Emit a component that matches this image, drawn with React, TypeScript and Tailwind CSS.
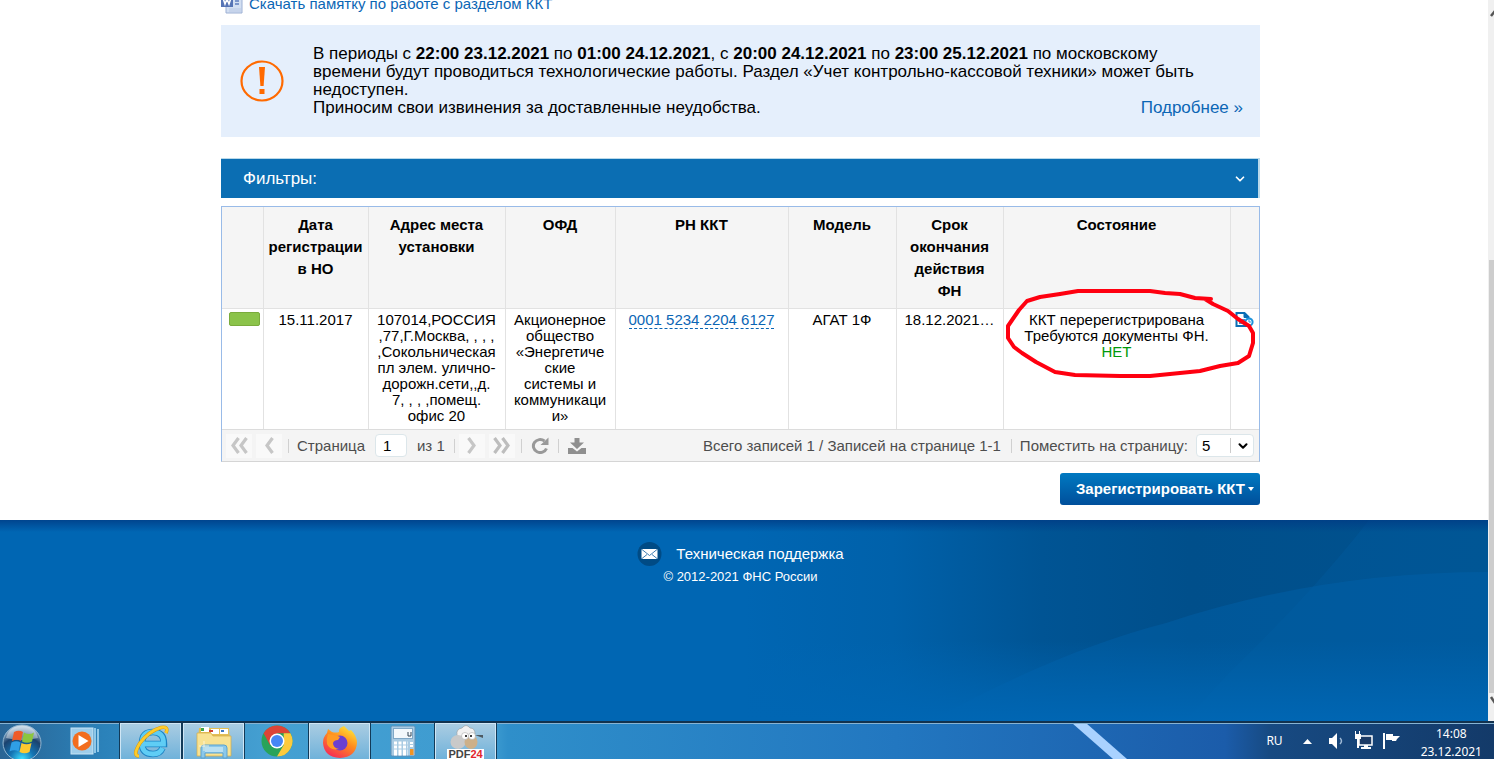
import { useState } from 'react';
import type { ReactNode } from 'react';
import { ChevronDown } from 'lucide-react';

interface Column {
  title: string[];
  width: string;
}

const COLUMNS: Column[] = [
  { title: [], width: 'w-[41px]' },
  { title: ['Дата', 'регистрации', 'в НО'], width: 'w-[105px]' },
  { title: ['Адрес места', 'установки'], width: 'w-[137px]' },
  { title: ['ОФД'], width: 'w-[110px]' },
  { title: ['РН ККТ'], width: 'w-[173px]' },
  { title: ['Модель'], width: 'w-[108px]' },
  { title: ['Срок', 'окончания', 'действия', 'ФН'], width: 'w-[107px]' },
  { title: ['Состояние'], width: 'w-auto' },
  { title: [], width: 'w-[29px]' },
];

const ADDRESS = [
  '107014,РОССИЯ',
  ',77,Г.Москва, , , ,',
  ',Сокольническая',
  'пл элем. улично-',
  'дорожн.сети,,д.',
  '7, , , ,помещ.',
  'офис 20',
];

const OFD = ['Акционерное', 'общество', '«Энергетиче', 'ские', 'системы и', 'коммуникаци', 'и»'];

function Lines({ items }: { items: string[] }) {
  return (
    <>
      {items.map((line) => (
        <span key={line} className="block whitespace-nowrap">{line}</span>
      ))}
    </>
  );
}

function WordIcon() {
  return (
    <svg width="22" height="22" viewBox="0 0 22 22" aria-hidden="true">
      <path d="M5 1h12l4 4v16H5z" fill="#d3dff2" stroke="#9db0d4" />
      <path d="M8 17h12M8 19h12" stroke="#b9c8e4" />
      <rect x="0" y="3" width="12" height="12" fill="#5674b5" />
      <path d="M2 6l2 6 2-5 2 5 2-6" fill="none" stroke="#fff" strokeWidth="1.5" />
      <path d="M14 9h4M14 12h4" stroke="#5f7fbe" strokeWidth="1.5" />
    </svg>
  );
}

function WarningIcon() {
  return (
    <svg width="44" height="42" viewBox="0 0 44 42" className="shrink-0" aria-hidden="true">
      <ellipse cx="22" cy="21" rx="20.5" ry="19.5" fill="none" stroke="#ff6a00" strokeWidth="2.2" />
      <path d="M19 7h6l-1.4 19h-3.2z" fill="#ff6a00" />
      <rect x="19.5" y="29" width="5" height="5" fill="#ff6a00" />
    </svg>
  );
}

function DocumentIcon() {
  return (
    <svg width="19" height="16" viewBox="0 0 19 16" aria-hidden="true">
      <path d="M1.5 1h8l4 4v9h-12z" fill="#fff" stroke="#0b6fb5" strokeWidth="2" />
      <path d="M9 1v4.5h5" fill="#0b6fb5" stroke="#0b6fb5" />
      <path d="M4 8h6M4 11h5" stroke="#0b6fb5" strokeWidth="1.6" />
      <circle cx="14" cy="10" r="3.6" fill="#fff" stroke="#1c93dc" strokeWidth="2" />
      <path d="M14 7.5V10h2" fill="none" stroke="#1c93dc" />
    </svg>
  );
}

function PagerButton({ label, children }: { label: string; children: ReactNode }) {
  return (
    <button type="button" aria-label={label} className="flex h-6 w-[26px] items-center justify-center bg-[#f9f9f9]">
      {children}
    </button>
  );
}

function Separator() {
  return <span className="h-[14px] w-px bg-[#d0d0d0]" />;
}

function Pager() {
  const [page, setPage] = useState('1');

  return (
    <div className="flex h-8 items-center justify-between border-t border-[#dcdcdc] bg-[#f4f4f4] pl-1 pr-[5px] text-[15px] leading-4 text-[#4d4d4d]">
      <div className="flex items-center">
        <PagerButton label="Первая страница">
          <svg width="18" height="17" viewBox="0 0 18 17" fill="none" stroke="#c6c6c6" strokeWidth="3.2">
            <path d="M8.5 1L3 8.5L8.5 16M16.5 1L11 8.5L16.5 16" />
          </svg>
        </PagerButton>
        <span className="w-1" />
        <PagerButton label="Предыдущая страница">
          <svg width="10" height="17" viewBox="0 0 10 17" fill="none" stroke="#c6c6c6" strokeWidth="3.2">
            <path d="M8.5 1L3 8.5L8.5 16" />
          </svg>
        </PagerButton>
        <span className="w-[6px]" />
        <Separator />
        <label htmlFor="page" className="pl-2">Страница</label>
        <input
          id="page"
          value={page}
          onChange={(e) => setPage(e.target.value)}
          className="ml-[10px] h-[23px] w-8 rounded border border-[#dce6ea] bg-white px-[7px] text-[15px] text-black"
        />
        <span className="w-[47px] pl-[10px] whitespace-nowrap">из 1</span>
        <Separator />
        <span className="w-1" />
        <PagerButton label="Следующая страница">
          <svg width="10" height="17" viewBox="0 0 10 17" fill="none" stroke="#c6c6c6" strokeWidth="3.2">
            <path d="M1.5 1L7 8.5L1.5 16" />
          </svg>
        </PagerButton>
        <span className="w-1" />
        <PagerButton label="Последняя страница">
          <svg width="18" height="17" viewBox="0 0 18 17" fill="none" stroke="#bdbdbd" strokeWidth="3.2">
            <path d="M1.5 1L7 8.5L1.5 16M9.5 1L15 8.5L9.5 16" />
          </svg>
        </PagerButton>
        <span className="w-[6px]" />
        <Separator />
        <button type="button" aria-label="Обновить" className="flex w-9 justify-center">
          <svg width="18" height="17" viewBox="0 0 18 17" aria-hidden="true">
            <path d="M15.5 11.5A6.8 6.5 0 1 1 13.5 4" fill="none" stroke="#999" strokeWidth="3" />
            <path d="M17.5 .5v7.500h-8z" fill="#999" />
          </svg>
        </button>
        <Separator />
        <button type="button" aria-label="Скачать" className="flex w-9 justify-center">
          <svg width="18" height="16" viewBox="0 0 18 16" fill="#8f8f8f" aria-hidden="true">
            <path d="M6.500 0h5v4.500h4.500L9 11 2 4.500h4.500z" />
            <path d="M0 10h4.500L9 13.500 13.500 10H18v6H0z" />
          </svg>
        </button>
      </div>
      <div className="flex items-center whitespace-nowrap">
        <span className="pr-[10px]">Всего записей 1 / Записей на странице 1-1</span>
        <Separator />
        <label htmlFor="size" className="pl-2">Поместить на страницу:</label>
        <span className="relative ml-2 flex">
          <select
            id="size"
            defaultValue="5"
            className="h-[23px] w-[58px] appearance-none rounded border border-[#dce6ea] bg-white px-[5px] text-[15px] text-black"
          >
            <option>5</option>
            <option>10</option>
            <option>20</option>
          </select>
          <span className="pointer-events-none absolute inset-y-1 right-0 flex w-6 items-center justify-center border-l border-[#ccc] text-black">
            <ChevronDown size={14} strokeWidth={3.5} />
          </span>
        </span>
      </div>
    </div>
  );
}

function CashRegisterTable() {
  return (
    <div className="relative border border-[#99bbe8] border-b-[#d5d5d5]">
      <table className="w-full table-fixed border-collapse text-center text-[15px]">
        <thead className="bg-[#f5f5f5] leading-[22px]">
          <tr className="h-[101px] align-top">
            {COLUMNS.map((col, i) => (
              <th key={i} className={`${col.width} border-b border-r border-[#e2e2e2] pt-[7px] font-bold last:border-r-0`}>
                <Lines items={col.title} />
              </th>
            ))}
          </tr>
        </thead>
        <tbody className="leading-4">
          <tr className="h-[121px] align-top *:border-r *:border-[#e2e2e2] *:pt-[3px] *:last:border-r-0">
            <td>
              <span className="ml-[7px] block h-[14px] w-[31px] rounded-[2px] border border-[#7aab3c] bg-[#8bc34a]" />
            </td>
            <td>15.11.2017</td>
            <td><Lines items={ADDRESS} /></td>
            <td><Lines items={OFD} /></td>
            <td>
              <a href="#kkt" className="inline-block border-b border-dashed border-[#0b66b5] text-[#0b66b5]">0001 5234 2204 6127</a>
            </td>
            <td>АГАТ 1Ф</td>
            <td>18.12.2021…</td>
            <td>
              <Lines items={['ККТ перерегистрирована', 'Требуются документы ФН.']} />
              <span className="text-[#00990a]">НЕТ</span>
            </td>
            <td>
              <a href="#docs" aria-label="Документы" className="flex justify-center"><DocumentIcon /></a>
            </td>
          </tr>
        </tbody>
      </table>
      <Pager />
      {/* red marker around the status cell */}
      <svg width="252" height="94" viewBox="1004 287 252 94" className="pointer-events-none absolute right-[3px] top-20" aria-hidden="true">
        <path
          d="M1211 299L1195 298L1180 294L1165 293L1150 291H1078L1060 294L1040 297L1027 301L1019 310L1008 326V338L1014 347L1022 353L1036 362L1055 372L1075 375L1120 376L1150 376L1180 373L1200 371L1220 366L1238 363L1249 356L1253 343V333L1249 326L1238 319L1228 311L1213 304L1205 299"
          fill="none"
          stroke="#ff0010"
          strokeWidth="4"
          strokeLinejoin="round"
          strokeLinecap="round"
        />
      </svg>
    </div>
  );
}

function Footer() {
  return (
    <footer className="relative grow bg-[#0066b3] pt-[22px] text-white">
      <svg viewBox="0 0 1488 201" preserveAspectRatio="none" className="absolute inset-0 h-full w-full" aria-hidden="true">
        <defs>
          <linearGradient id="deep" x1="0" x2="1">
            <stop offset="0.5" stopColor="#0066b3" />
            <stop offset="0.6" stopColor="#0061aa" />
            <stop offset="0.7" stopColor="#005494" />
            <stop offset="0.8" stopColor="#004f8b" />
            <stop offset="1" stopColor="#00528f" />
          </linearGradient>
          <linearGradient id="rise" x1="0" y1="0" x2="0" y2="1">
            <stop offset="0.6" stopColor="#0066b3" stopOpacity="0" />
            <stop offset="1" stopColor="#0066b3" />
          </linearGradient>
          <linearGradient id="edge" x1="0" y1="0" x2="0" y2="1">
            <stop offset="0" stopColor="#003c85" stopOpacity="0.8" />
            <stop offset="1" stopColor="#003c85" stopOpacity="0" />
          </linearGradient>
        </defs>
        <rect width="1488" height="201" fill="url(#deep)" />
        <path d="M1369 0Q1315 70 1229 153L1185 201H1488V0z" fill="#0060a5" opacity="0.3" />
        <path d="M976 177Q1080 125 1166 103Q1320 52 1488 52V201H930z" fill="#0062aa" opacity="0.45" />
        <rect width="1488" height="201" fill="url(#rise)" />
        <rect width="1488" height="12" fill="url(#edge)" />
      </svg>
      <div className="relative flex flex-col items-center pr-[7px]">
        <a href="#support" className="flex items-center gap-[14px] text-[15px] leading-6">
          <svg width="25" height="24" viewBox="0 0 25 24" aria-hidden="true">
            <circle cx="12.5" cy="12" r="12" fill="#004b85" />
            <rect x="4.5" y="7" width="16" height="10" rx="1" fill="#fff" />
            <path d="M5 7.5l7.5 6 7.5-6M5 16.5l5-4M20 16.5l-5-4" fill="none" stroke="#3f7fb5" />
          </svg>
          Техническая поддержка
        </a>
        <p className="pt-[3px] text-[13px] leading-4">© 2012-2021 ФНС России</p>
      </div>
    </footer>
  );
}

function Scrollbar() {
  return (
    <div className="flex w-[6px] shrink-0 flex-col overflow-hidden bg-[#f0f0f0]" aria-hidden="true">
      <svg width="6" height="260" viewBox="0 0 6 260"><path d="M3 16l4-5" stroke="#555" strokeWidth="2.5" /></svg>
      <span className="ml-px grow bg-[#cdcdcd]" />
      <svg width="6" height="28" viewBox="0 0 6 28"><path d="M3 4l4 6" stroke="#555" strokeWidth="2.5" /></svg>
    </div>
  );
}

function StartIcon() {
  return (
    <svg width="42" height="36" viewBox="0 0 42 36" aria-hidden="true">
      <defs>
        <radialGradient id="orb" cx="0.5" cy="0.95" r="0.9">
          <stop offset="0" stopColor="#3ee0ff" />
          <stop offset="0.35" stopColor="#1475b5" />
          <stop offset="0.7" stopColor="#1b426e" />
          <stop offset="1" stopColor="#a9c3d8" />
        </radialGradient>
      </defs>
      <ellipse cx="21" cy="20" rx="19" ry="18" fill="url(#orb)" stroke="#8fb4d0" />
      <path d="M5 15Q8 3 21 2.500Q34 3 37 15Q21 19 5 15z" fill="#fff" opacity="0.4" />
      <path d="M13 9q5-2.500 9 0l-2 9q-4-2.500-9 0z" fill="#ef5a28" />
      <path d="M23 9.500q5 3 10 0l-2 9q-5 2.500-10 0z" fill="#8cc63e" />
      <path d="M10.500 19.500q5-2.500 9 0l-2 9q-4-2.500-9 0z" fill="#2f9fe6" />
      <path d="M20.500 20q5 2.500 10 0l-2 9q-5 2.500-10 0z" fill="#fdc92f" />
    </svg>
  );
}

function PlayerIcon() {
  return (
    <svg width="30" height="28" viewBox="0 0 30 28" aria-hidden="true">
      <path d="M24 1h2v25h-2zM27 2h2v23h-2z" fill="#8ec7e8" />
      <rect x="1" y="1" width="22" height="26" fill="#9ecdea" stroke="#c7e4f5" />
      <circle cx="12" cy="14" r="9.5" fill="#f26d1e" />
      <path d="M8.500 8l10 6-10 6z" fill="#fff" />
    </svg>
  );
}

function ExplorerEIcon() {
  return (
    <svg width="36" height="34" viewBox="0 0 36 34" fill="none" aria-hidden="true">
      <path d="M11 19H31Q31 7 20 7 9 7 9 18.500 9 29 20 29 27 29 29.500 23" stroke="#1c83c4" strokeWidth="6.500" />
      <path d="M11 19H30.500Q31 7 20 7 9 7 9 18.500 9 29 20 29 27 29 29.500 23" stroke="#5fcdf5" strokeWidth="4.800" />
      <path d="M6 31Q-1 31 7 18 16 6 28 2.500 36 1 33 8" stroke="#d99a10" strokeWidth="3.600" />
      <path d="M6 31Q-1 31 7 18 16 6 28 2.500 36 1 33 8" stroke="#fdcb2b" strokeWidth="2.600" />
    </svg>
  );
}

function FolderIcon() {
  return (
    <svg width="38" height="34" viewBox="0 0 38 34" aria-hidden="true">
      <path d="M4 3h30l2 26H2z" fill="#e3bf55" />
      <path d="M6 2h8v5H6zM16 4h8v5h-8zM25 4h8v5h-8z" fill="#fff" />
      <path d="M6 3h3v3H6z" fill="#3fa64b" />
      <path d="M14 5h4v2h-4z" fill="#d2432e" />
      <path d="M26 5h3v2h-3z" fill="#3e78c4" />
      <path d="M2 8h14l2 3h18v20H2z" fill="#f8e292" stroke="#d5ae45" strokeWidth=".7" />
      <path d="M6 33V23q0-3 3-3h20q3 0 3 3v10h-4v-5H10v5z" fill="#8bc8ea" stroke="#5ba2cf" />
      <path d="M10 22h18v5H10z" fill="#b9e0f3" />
      <path d="M9 16v10M4 21h10" stroke="#fffbe2" strokeWidth=".8" />
    </svg>
  );
}

function ChromeIcon() {
  return (
    <svg width="34" height="32" viewBox="0 0 34 32" aria-hidden="true">
      <circle cx="17" cy="16" r="15.5" fill="#28a35a" />
      <path d="M3.600 8.200A15.500 15.500 0 0 1 30.400 8.200H17L10 20z" fill="#db4437" />
      <path d="M30.400 8.200A15.500 15.500 0 0 1 17 31.500L23.700 20V8.200z" fill="#fdca3d" />
      <circle cx="17" cy="16" r="7.5" fill="#fff" />
      <circle cx="17" cy="16" r="6" fill="#4687f4" />
    </svg>
  );
}

function FirefoxIcon() {
  return (
    <svg width="36" height="34" viewBox="0 0 36 34" aria-hidden="true">
      <defs>
        <linearGradient id="fox" x1="0.8" y1="0" x2="0.2" y2="1">
          <stop offset="0" stopColor="#ffe93a" />
          <stop offset="0.45" stopColor="#ff8a1e" />
          <stop offset="1" stopColor="#f5235b" />
        </linearGradient>
      </defs>
      <path d="M22 1q3 3 5 5l2-1q6 6 6 13-1 14-17 15Q2 32 1 18q0-6 4-10l1-4 4 3q4 1 7 0-1-4 5-6z" fill="url(#fox)" />
      <circle cx="18" cy="18" r="7.5" fill="#6b3fd1" />
      <path d="M6 9q8 1 12 3l-2 3q-4 0-5 3 0 5 6 6-9 2-12-5-1-5 1-10z" fill="#ff9a24" />
    </svg>
  );
}

function CalculatorIcon() {
  return (
    <svg width="26" height="32" viewBox="0 0 26 32" aria-hidden="true">
      <rect x="1" y="1" width="24" height="30" rx="1.5" fill="#a9cbe3" stroke="#5f90b8" />
      <rect x="3.5" y="3.5" width="19" height="10" fill="#f3f8fc" stroke="#7fa7c6" />
      <path d="M18 7v4h3V7" fill="none" stroke="#345" strokeWidth="1" />
      <path d="M4 18h14M4 22h14M4 26h14M4 29h14" stroke="#fff" strokeWidth="2.8" strokeDasharray="3 1.5" />
      <path d="M20 18h3M20 21h3" stroke="#fff" strokeWidth="2" />
      <rect x="20" y="24" width="3.5" height="6" fill="#f29422" />
    </svg>
  );
}

function SheepIcon() {
  return (
    <span className="flex flex-col items-center">
      <svg width="34" height="24" viewBox="0 0 34 24" aria-hidden="true">
        <path d="M8 10q-1-6 5-7 4-5 8 0 5 0 5 6l-2 3H10z" fill="#f1f1f1" stroke="#999" strokeWidth=".6" />
        <ellipse cx="9" cy="17" rx="7.500" ry="7" fill="#c9c9c9" />
        <ellipse cx="22" cy="17" rx="6.500" ry="7" fill="#cdb089" />
        <circle cx="16" cy="11" r="3.5" fill="#fff" stroke="#aaa" strokeWidth=".6" />
        <circle cx="23" cy="11" r="3.5" fill="#fff" stroke="#aaa" strokeWidth=".6" />
        <circle cx="17" cy="11" r="1" />
        <circle cx="22" cy="11" r="1" />
        <path d="M26 10h8v3z" fill="#4e5a62" />
      </svg>
      <span className="bg-white px-px text-[11px] font-bold leading-[10px] text-[#444]">
        PDF<span className="text-[#e2262c]">24</span>
      </span>
    </span>
  );
}

function TaskButton({ label, active, children }: { label: string; active?: boolean; children: ReactNode }) {
  return (
    <button
      type="button"
      aria-label={label}
      className={
        'flex h-full w-[61px] items-center justify-center overflow-hidden ' +
        (active ? 'border-x border-t border-[#cfe6f5] bg-linear-to-b from-[#a9cce2] to-[#6fb2da] outline outline-[#123a58]' : '')
      }
    >
      {children}
    </button>
  );
}

function Taskbar() {
  return (
    <div className="relative flex h-[38px] shrink-0 items-center justify-between overflow-hidden border-t-2 border-[#12324e] bg-[#2480c2] text-white">
      <svg viewBox="0 0 1494 36" preserveAspectRatio="none" className="absolute inset-0 h-full w-full" aria-hidden="true">
        <defs>
          <linearGradient id="aero" x1="0" x2="1">
            <stop offset="0" stopColor="#2a6595" />
            <stop offset="0.07" stopColor="#2b82ba" />
            <stop offset="0.18" stopColor="#45a0d2" />
            <stop offset="0.33" stopColor="#3d9bd0" />
            <stop offset="0.34" stopColor="#2f8fca" />
            <stop offset="0.6" stopColor="#2277c0" />
            <stop offset="0.82" stopColor="#1b5caa" />
            <stop offset="0.85" stopColor="#174a82" />
            <stop offset="1" stopColor="#133a69" />
          </linearGradient>
        </defs>
        <rect width="1494" height="36" fill="url(#aero)" />
        <path d="M1072 0h14l41 36h-14z" fill="#a9d2ff" />
        <path d="M0 .5h1494" stroke="#86b4d4" />
      </svg>
      <div className="relative flex h-full items-center gap-[2px]">
        <button type="button" aria-label="Пуск" className="flex w-[52px] pl-px"><StartIcon /></button>
        <TaskButton label="Проигрыватель"><PlayerIcon /></TaskButton>
        <span className="w-px" />
        <TaskButton label="Internet Explorer" active><ExplorerEIcon /></TaskButton>
        <TaskButton label="Проводник" active><FolderIcon /></TaskButton>
        <TaskButton label="Chrome"><ChromeIcon /></TaskButton>
        <TaskButton label="Firefox" active><FirefoxIcon /></TaskButton>
        <TaskButton label="Калькулятор"><CalculatorIcon /></TaskButton>
        <TaskButton label="PDF24" active><SheepIcon /></TaskButton>
      </div>
      <div className="relative flex items-center pr-[12px] font-['Noto_Sans',sans-serif] text-[12px] leading-[18px]">
        <span className="pr-5">RU</span>
        <svg width="9" height="5" viewBox="0 0 9 5" aria-hidden="true"><path d="M0 5L4.500 0 9 5z" fill="#fff" /></svg>
        <svg width="92" height="20" viewBox="0 0 92 20" fill="#fff" aria-hidden="true">
          <path d="M17 7h3l5-5v16l-5-5h-3z" />
          <path d="M28 7q3 3 0 6" fill="none" stroke="#9db8d4" strokeWidth="1.500" />
          <path d="M47 5h13v9H47z" fill="#1d3c66" stroke="#fff" strokeWidth="1.500" />
          <path d="M52 14h4v2h3v2h-10v-2h3zM43 3h6v5h-6zM45 8h2v9h-2zM43 0h1v3h-1zM47 0h1v3h-1z" />
          <path d="M71 2h2v16h-2zM74 3h7v2h7l-3 3-1 2h-4V9h-6z" />
        </svg>
        <div className="pl-[17px] pt-1 text-center">
          <p>14:08</p>
          <p>23.12.2021</p>
        </div>
      </div>
    </div>
  );
}

export default function App() {
  return (
    <div className="flex h-screen flex-col overflow-hidden bg-white font-['Liberation_Sans',Arial,sans-serif] text-black">
      <div className="flex min-h-0 grow">
        <div className="flex min-w-0 grow flex-col overflow-hidden">
          <main className="mx-auto w-full max-w-[1046px] shrink-0 pr-[7px]">
            <a href="#memo" className="flex h-[25px] items-start gap-[6px] text-[15px] leading-[7px] text-[#0b66b5]">
              <span className="-mt-2"><WordIcon /></span>
              Скачать памятку по работе с разделом ККТ
            </a>

            <section className="flex items-center bg-[#e5effc] py-5 pl-[19px] pr-[17px] text-[17px] leading-[18px]">
              <WarningIcon />
              <div className="grow pl-[29px]">
                <p>
                  В периоды с <b>22:00 23.12.2021</b> по <b>01:00 24.12.2021</b>, с <b>20:00 24.12.2021</b> по{' '}
                  <b>23:00 25.12.2021</b> по московскому
                  <br />
                  времени будут проводиться технологические работы. Раздел «Учет контрольно-кассовой техники» может быть
                  <br />
                  недоступен.
                </p>
                <div className="flex justify-between">
                  <p>Приносим свои извинения за доставленные неудобства.</p>
                  <a href="#more" className="text-[#0b66b5]">Подробнее »</a>
                </div>
              </div>
            </section>

            <button
              type="button"
              className="mt-[21px] flex h-10 w-full items-center justify-between border-t border-r-2 border-[#b9d9ea] bg-[#0b6eb3] pl-[22px] pr-[11px] text-[17px] text-white"
            >
              Фильтры:
              <ChevronDown size={14} strokeWidth={3} />
            </button>

            <div className="pt-2">
              <CashRegisterTable />
            </div>

            <div className="flex justify-end pb-[15px] pt-[11px]">
              <button
                type="button"
                className="flex h-8 items-center gap-[3px] rounded-[3px] bg-linear-to-b from-[#0079c1] to-[#004f9b] pl-4 pr-[6px] text-[15px] font-bold text-white"
              >
                Зарегистрировать ККТ
                <svg width="6" height="4" viewBox="0 0 6 4" aria-hidden="true"><path d="M0 0h6L3 4z" fill="#fff" /></svg>
              </button>
            </div>
          </main>
          <Footer />
        </div>
        <Scrollbar />
      </div>
      <Taskbar />
    </div>
  );
}
